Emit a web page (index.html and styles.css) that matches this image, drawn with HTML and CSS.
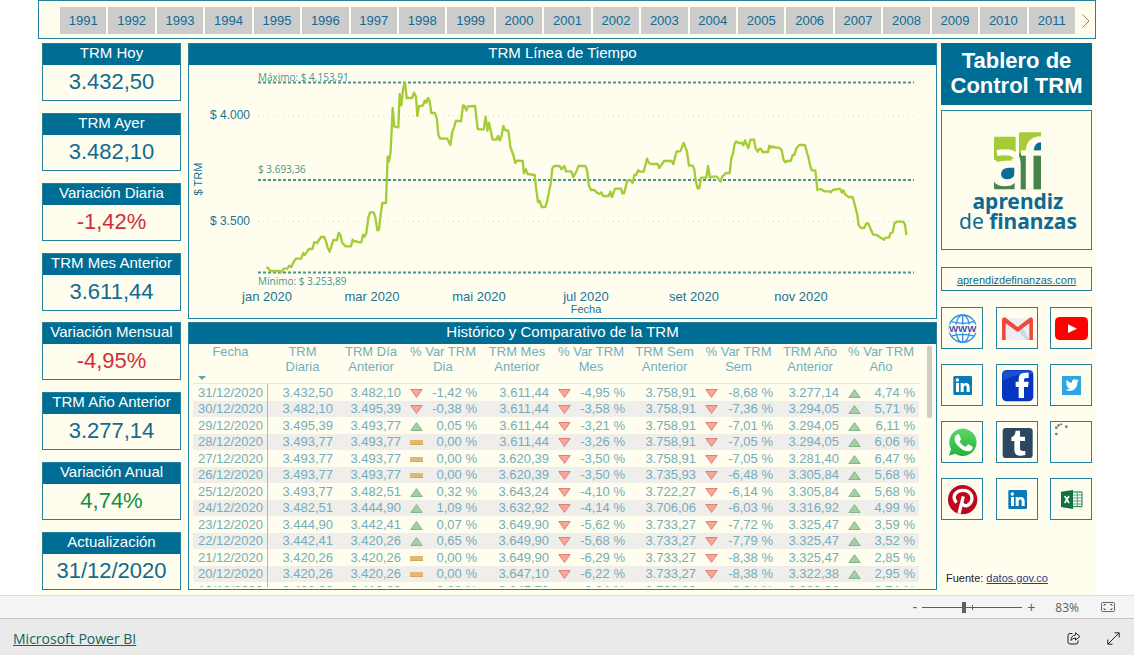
FILE: index.html
```html
<!DOCTYPE html>
<html lang="es">
<head>
<meta charset="utf-8">
<meta name="viewport" content="width=device-width, initial-scale=1">
<title>Tablero de Control TRM</title>
<link rel="stylesheet" href="styles.css">
</head>
<body>
<svg class="defs" aria-hidden="true">
  <symbol id="dn" viewBox="0 0 13 9"><path d="M.8.5h11.4L6.5 8.4z" fill="#f6a79a" stroke="#dd8176"/></symbol>
  <symbol id="up" viewBox="0 0 13 9"><path d="M.8 8.5h11.4L6.5.6z" fill="#a3cfa5" stroke="#86b58c"/></symbol>
  <symbol id="eq" viewBox="0 0 13 9"><path d="M0 2h13v5H0z" fill="#e2b873"/><path d="M0 6.500h13" stroke="#d1a967"/></symbol>
  <symbol id="linkedin" viewBox="3 3 120 120">
    <rect x="37" y="36" width="56" height="57" rx="4" fill="#0a7ab5"/>
    <g fill="#fff"><circle cx="49" cy="48" r="5"/><path d="M45 57h9v27h-9zM59 57h8v4c4-6 19-7 19 8v15h-9V70c0-8-9-7-9 0v14h-9z"/></g>
  </symbol>
</svg>

<main class="report">
  <nav class="slicer" aria-label="Año">
    <div class="years">
      <button>1991</button><button>1992</button><button>1993</button><button>1994</button><button>1995</button><button>1996</button><button>1997</button><button>1998</button><button>1999</button><button>2000</button><button>2001</button><button>2002</button><button>2003</button><button>2004</button><button>2005</button><button>2006</button><button>2007</button><button>2008</button><button>2009</button><button>2010</button><button>2011</button>
    </div>
    <button class="next" aria-label="Siguiente"><svg viewBox="0 0 8 14" width="8" height="14"><path d="M.5.5 7 7 .5 13.500" fill="none" stroke="#a07f58"/></svg></button>
  </nav>

  <div class="board">
    <section class="cards">
      <article class="panel"><h2>TRM Hoy</h2><p>3.432,50</p></article>
      <article class="panel"><h2>TRM Ayer</h2><p>3.482,10</p></article>
      <article class="panel"><h2>Variación Diaria</h2><p class="neg">-1,42%</p></article>
      <article class="panel"><h2>TRM Mes Anterior</h2><p>3.611,44</p></article>
      <article class="panel"><h2>Variación Mensual</h2><p class="neg">-4,95%</p></article>
      <article class="panel"><h2>TRM Año Anterior</h2><p>3.277,14</p></article>
      <article class="panel"><h2>Variación Anual</h2><p class="pos">4,74%</p></article>
      <article class="panel"><h2>Actualización</h2><p>31/12/2020</p></article>
    </section>

    <div class="center">
      <section class="panel">
        <h2>TRM Línea de Tiempo</h2>
        <svg class="chart" viewBox="189 66 747 252" role="img" aria-label="TRM Línea de Tiempo">
          <g class="grid"><path d="M258 115.500H914M258 221.500H914"/></g>
          <g class="limits"><path d="M258 82.500H914M258 180H914M258 272.500H914"/></g>
          <svg x="180" y="40" width="760" height="280" viewBox="0 0 2280 840">
            <path class="line" d="M259 683 265 684 270 693 300 693 304 697 311 686 322 686 328 677 334 681 341 665 348 656 364 656 370 639 375 645 386 627 397 627 403 606 411 609 423 591 433 591 438 605 443 623 449 635 460 600 471 600 476 578 481 585 487 609 497 619 513 619 518 599 522 605 528 603 533 606 544 607 549 584 554 590 559 579 565 533 570 517 581 517 586 532 592 571 597 569 602 524 607 489 618 489 620 430 623 350 627 365 632 333 638 204 643 260 655 262 659 162 664 196 670 142 675 128 680 174 697 174 702 158 708 170 712 228 717 198 729 197 734 182 739 188 744 174 749 184 754 219 765 219 771 238 775 285 781 296 802 296 811 315 817 275 822 262 828 242 843 244 849 196 854 198 859 212 864 199 885 198 893 266 896 268 911 268 917 230 922 272 927 248 938 299 949 299 954 288 959 301 964 290 970 258 975 270 985 272 991 320 1001 348 1006 369 1011 362 1028 363 1032 400 1037 388 1043 402 1064 405 1069 450 1074 486 1079 482 1085 501 1096 501 1101 485 1107 455 1112 432 1117 385 1122 378 1139 378 1144 388 1153 378 1158 394 1174 394 1180 411 1190 393 1195 378 1216 378 1221 390 1227 438 1233 450 1244 450 1249 457 1259 462 1264 457 1269 468 1286 468 1291 455 1296 471 1305 446 1323 446 1327 460 1332 460 1342 422 1353 422 1358 429 1363 405 1368 405 1374 391 1380 395 1391 395 1401 356 1407 369 1413 372 1433 372 1438 384 1452 363 1475 363 1480 373 1485 352 1490 334 1501 334 1511 309 1521 335 1527 377 1538 377 1543 388 1547 422 1553 445 1558 445 1563 413 1579 413 1584 378 1590 413 1595 410 1611 410 1621 425 1627 410 1638 399 1649 399 1654 355 1659 340 1664 311 1669 304 1675 309 1686 309 1690 316 1695 301 1705 325 1711 299 1722 299 1727 325 1733 335 1738 327 1743 327 1748 336 1764 336 1768 317 1774 323 1779 319 1785 323 1797 323 1805 330 1811 361 1816 367 1821 363 1832 363 1838 345 1843 345 1849 325 1858 315 1875 315 1881 338 1885 350 1890 375 1895 391 1906 391 1912 450 1922 447 1933 454 1948 454 1953 457 1958 450 1980 446 1986 458 1990 451 1996 464 2006 471 2017 471 2022 485 2027 505 2032 525 2036 555 2043 564 2053 564 2059 550 2065 550 2073 570 2080 584 2090 585 2102 593 2112 599 2116 593 2127 593 2132 579 2138 577 2143 551 2150 545 2170 545 2175 554 2179 585"/>
          </svg>
          <g class="ref"><text x="258" y="81">Máximo: $ 4.153,91</text><text x="258" y="173">$ 3.693,36</text><text x="258" y="285">Mínimo: $ 3.253,89</text></g>
          <g class="axis">
            <text class="value" x="250" y="119">$ 4.000</text><text class="value" x="250" y="225">$ 3.500</text>
            <text x="267" y="301">jan 2020</text><text x="372" y="301">mar 2020</text><text x="479" y="301">mai 2020</text><text x="586" y="301">jul 2020</text><text x="694" y="301">set 2020</text><text x="801" y="301">nov 2020</text>
            <text class="name" x="586" y="313">Fecha</text>
            <text class="name" transform="translate(202 179) rotate(-90)">$ TRM</text>
          </g>
        </svg>
      </section>

      <section class="panel">
        <h2>Histórico y Comparativo de la TRM</h2>
        <div class="scroller">
          <table class="history">
            <colgroup><col class="c75"><col class="c69"><col class="c68"><col class="c76"><col class="c72"><col class="c76"><col class="c71"><col class="c77"><col class="c66"><col class="c76"></colgroup>
            <thead><tr><th>Fecha<svg class="sort" viewBox="0 0 8 4"><path d="M0 0h8L4 4z" fill="#5fa3b5"/></svg></th><th>TRM Diaria</th><th>TRM Día Anterior</th><th>% Var TRM Dia</th><th>TRM Mes Anterior</th><th>% Var TRM Mes</th><th>TRM Sem Anterior</th><th>% Var TRM Sem</th><th>TRM Año Anterior</th><th>% Var TRM Año</th></tr></thead>
            <tbody>
              <tr><td>31/12/2020</td><td>3.432,50</td><td>3.482,10</td><td><svg><use href="#dn"/></svg>-1,42 %</td><td>3.611,44</td><td><svg><use href="#dn"/></svg>-4,95 %</td><td>3.758,91</td><td><svg><use href="#dn"/></svg>-8,68 %</td><td>3.277,14</td><td><svg><use href="#up"/></svg>4,74 %</td></tr>
              <tr><td>30/12/2020</td><td>3.482,10</td><td>3.495,39</td><td><svg><use href="#dn"/></svg>-0,38 %</td><td>3.611,44</td><td><svg><use href="#dn"/></svg>-3,58 %</td><td>3.758,91</td><td><svg><use href="#dn"/></svg>-7,36 %</td><td>3.294,05</td><td><svg><use href="#up"/></svg>5,71 %</td></tr>
              <tr><td>29/12/2020</td><td>3.495,39</td><td>3.493,77</td><td><svg><use href="#up"/></svg>0,05 %</td><td>3.611,44</td><td><svg><use href="#dn"/></svg>-3,21 %</td><td>3.758,91</td><td><svg><use href="#dn"/></svg>-7,01 %</td><td>3.294,05</td><td><svg><use href="#up"/></svg>6,11 %</td></tr>
              <tr><td>28/12/2020</td><td>3.493,77</td><td>3.493,77</td><td><svg><use href="#eq"/></svg>0,00 %</td><td>3.611,44</td><td><svg><use href="#dn"/></svg>-3,26 %</td><td>3.758,91</td><td><svg><use href="#dn"/></svg>-7,05 %</td><td>3.294,05</td><td><svg><use href="#up"/></svg>6,06 %</td></tr>
              <tr><td>27/12/2020</td><td>3.493,77</td><td>3.493,77</td><td><svg><use href="#eq"/></svg>0,00 %</td><td>3.620,39</td><td><svg><use href="#dn"/></svg>-3,50 %</td><td>3.758,91</td><td><svg><use href="#dn"/></svg>-7,05 %</td><td>3.281,40</td><td><svg><use href="#up"/></svg>6,47 %</td></tr>
              <tr><td>26/12/2020</td><td>3.493,77</td><td>3.493,77</td><td><svg><use href="#eq"/></svg>0,00 %</td><td>3.620,39</td><td><svg><use href="#dn"/></svg>-3,50 %</td><td>3.735,93</td><td><svg><use href="#dn"/></svg>-6,48 %</td><td>3.305,84</td><td><svg><use href="#up"/></svg>5,68 %</td></tr>
              <tr><td>25/12/2020</td><td>3.493,77</td><td>3.482,51</td><td><svg><use href="#up"/></svg>0,32 %</td><td>3.643,24</td><td><svg><use href="#dn"/></svg>-4,10 %</td><td>3.722,27</td><td><svg><use href="#dn"/></svg>-6,14 %</td><td>3.305,84</td><td><svg><use href="#up"/></svg>5,68 %</td></tr>
              <tr><td>24/12/2020</td><td>3.482,51</td><td>3.444,90</td><td><svg><use href="#up"/></svg>1,09 %</td><td>3.632,92</td><td><svg><use href="#dn"/></svg>-4,14 %</td><td>3.706,06</td><td><svg><use href="#dn"/></svg>-6,03 %</td><td>3.316,92</td><td><svg><use href="#up"/></svg>4,99 %</td></tr>
              <tr><td>23/12/2020</td><td>3.444,90</td><td>3.442,41</td><td><svg><use href="#up"/></svg>0,07 %</td><td>3.649,90</td><td><svg><use href="#dn"/></svg>-5,62 %</td><td>3.733,27</td><td><svg><use href="#dn"/></svg>-7,72 %</td><td>3.325,47</td><td><svg><use href="#up"/></svg>3,59 %</td></tr>
              <tr><td>22/12/2020</td><td>3.442,41</td><td>3.420,26</td><td><svg><use href="#up"/></svg>0,65 %</td><td>3.649,90</td><td><svg><use href="#dn"/></svg>-5,68 %</td><td>3.733,27</td><td><svg><use href="#dn"/></svg>-7,79 %</td><td>3.325,47</td><td><svg><use href="#up"/></svg>3,52 %</td></tr>
              <tr><td>21/12/2020</td><td>3.420,26</td><td>3.420,26</td><td><svg><use href="#eq"/></svg>0,00 %</td><td>3.649,90</td><td><svg><use href="#dn"/></svg>-6,29 %</td><td>3.733,27</td><td><svg><use href="#dn"/></svg>-8,38 %</td><td>3.325,47</td><td><svg><use href="#up"/></svg>2,85 %</td></tr>
              <tr><td>20/12/2020</td><td>3.420,26</td><td>3.420,26</td><td><svg><use href="#eq"/></svg>0,00 %</td><td>3.647,10</td><td><svg><use href="#dn"/></svg>-6,22 %</td><td>3.733,27</td><td><svg><use href="#dn"/></svg>-8,38 %</td><td>3.322,38</td><td><svg><use href="#up"/></svg>2,95 %</td></tr>
              <tr><td>19/12/2020</td><td>3.420,26</td><td>3.410,60</td><td>0,28 %</td><td>3.647,70</td><td>-6,24 %</td><td>3.722,83</td><td>-8,24 %</td><td>3.329,06</td><td>2,74 %</td></tr>
            </tbody>
          </table>
          <div class="thumb"></div>
        </div>
      </section>
    </div>

    <aside class="side">
      <h1>Tablero de Control TRM</h1>
      <div class="box logo">
        <svg viewBox="0 0 149 138" role="img" aria-label="aprendiz de finanzas">
          <svg x="43" y="14" width="70" height="70" viewBox="0 0 210 210">
            <path d="M27 100V39q0-4 4-4h61v70H27z" fill="#a5cb36"/>
            <path d="M27 120h65v73H31q-4 0-4-4z" fill="#48854c"/>
            <path d="M102 92V26q0-4 4-4h62v70z" fill="#a5cb36"/>
            <path d="M102 85h66v108h-66z" fill="#48854c"/>
            <path d="M24 108q20-8 45-6h28v56q-4 24-36 26-28 0-37-20z" fill="#fffdee"/>
            <path d="M34 98q22-4 44 0l2 9q-24-2-46 4z" fill="#a5cb36"/>
            <path d="M36 84q28-5 46 1 16 8 16 32v78" fill="none" stroke="#fffdee" stroke-width="18"/>
            <path d="M48 146q2-18 24-18h16v16q0 18-20 19-20 0-20-17z" fill="#0a6c97"/>
            <path d="M134 194V78q0-32 36-33" fill="none" stroke="#fffdee" stroke-width="23"/>
            <path d="M108 84h62" stroke="#fffdee" stroke-width="16"/>
            <path d="M147 76q1-24 21-24v24z" fill="#0a6c97"/>
          </svg>
          <text class="brand" x="76" y="98">aprendiz</text>
          <text class="brand" x="76" y="118"><tspan class="thin">de </tspan>finanzas</text>
        </svg>
      </div>
      <div class="box site"><a href="#">aprendizdefinanzas.com</a></div>
      <div class="social">
        <a class="box" href="#" aria-label="Sitio web"><svg viewBox="3 3 120 120"><g fill="none" stroke="#2c94e8" stroke-width="4"><circle cx="65" cy="65" r="41"/><ellipse cx="65" cy="65" rx="21" ry="41"/><path d="M65 24v82M31 44q34 10 68 0M31 87q34-10 68 0"/></g><path d="M22 53h87v24H22z" fill="#fffdee"/><text class="www" x="65" y="75">WWW</text></svg></a>
        <a class="box" href="#" aria-label="Gmail"><svg viewBox="3 3 120 120"><path d="M18 34h93v65H18z" fill="#eceff1"/><path d="m65 70 15-9 21 38H90z" fill="#cfd8dc"/><path d="M18 99V40q0-9 9-9l38 29 38-29q8 0 8 9v59h-11V49L65 75 29 49v50z" fill="#f4483a"/></svg></a>
        <a class="box" href="#" aria-label="YouTube"><svg viewBox="3 3 120 120"><rect x="15" y="30" width="99" height="69" rx="14" fill="#fe0000"/><path d="m54 52 27 13-27 13z" fill="#fff"/></svg></a>
        <a class="box" href="#" aria-label="LinkedIn"><svg><use href="#linkedin"/></svg></a>
        <a class="box" href="#" aria-label="Facebook"><svg viewBox="3 3 120 120"><rect x="18" y="18" width="94" height="94" rx="14" fill="#0636c0"/><path d="M20 50V32q0-12 12-12h66q12 0 12 10-50-2-90 20z" fill="#1c50cc"/><path d="M68 102V69h-9V53h9V45q0-19 20-19h10v16h-8q-6 0-6 6v5h14l-2 16H84v33z" fill="#fff"/></svg></a>
        <a class="box" href="#" aria-label="Twitter"><svg viewBox="3 3 120 120"><path d="M36 36h57v57H36z" fill="#2ca5e0"/><path d="M47 77c7 0 10-2 12-4-4 0-7-2-8-6h4c-5-1-7-5-7-9l4 1c-4-3-4-8-2-11 4 5 9 8 16 8-2-10 8-13 14-8l6-2-4 5 5-1-5 5c1 22-20 32-35 22z" fill="#fff"/></svg></a>
        <a class="box" href="#" aria-label="WhatsApp"><svg viewBox="3 3 120 120"><defs><linearGradient id="wa" x2="0" y2="1"><stop stop-color="#5fd668"/><stop offset="1" stop-color="#22b33a"/></linearGradient></defs><path d="m18 110 7-24a46 46 0 1 1 17 18z" fill="#fff"/><path d="m24 104 6-20a41 41 0 1 1 13 14z" fill="url(#wa)"/><path d="M47 41q5-4 8 1l5 11q0 3-5 8 6 12 19 17l6-7q2-2 5 0l10 6q1 12-13 14-16 0-30-15Q37 61 42 47z" fill="#fff"/></svg></a>
        <a class="box" href="#" aria-label="Tumblr"><svg viewBox="3 3 120 120"><rect x="20" y="21" width="90" height="90" rx="10" fill="#2c4762"/><path d="M59 29h13v18h15v13H72v22q0 8 8 8h8v12q-10 3-18 2-15-2-15-18V60h-9V49q12-4 13-20z" fill="#fff"/></svg></a>
        <a class="box" href="#" aria-label="Cargando"><svg viewBox="3 3 120 120"><g fill="#777"><circle cx="19" cy="20" r="4"/><circle cx="26" cy="13" r="4"/><circle cx="34" cy="10" r="3"/><circle cx="49" cy="17" r="4"/><circle cx="19" cy="39" r="4"/></g></svg></a>
        <a class="box" href="#" aria-label="Pinterest"><svg viewBox="3 3 120 120"><circle cx="65" cy="65" r="47" fill="#fff"/><circle cx="65" cy="65" r="44" fill="#bd081c"/><path d="M46 74C30 54 46 37 66 37s30 15 26 30-20 22-28 10M67 55 54 107" fill="none" stroke="#fff" stroke-width="10"/></svg></a>
        <a class="box" href="#" aria-label="LinkedIn personal"><svg><use href="#linkedin"/></svg></a>
        <a class="box" href="#" aria-label="Excel"><svg viewBox="3 3 120 120"><path d="M66 42h30v44H66z" fill="#fff" stroke="#157744" stroke-width="3"/><path d="M66 51h30M66 60h30M66 69h30M66 78h30M82 42v44" stroke="#157744" stroke-width="2"/><path d="m33 41 36-5v57l-36-6z" fill="#0f7240"/><path d="m44 54 13 21M57 54 44 75" stroke="#fff" stroke-width="5"/></svg></a>
      </div>
      <p class="source">Fuente: <a href="#">datos.gov.co</a></p>
    </aside>
  </div>
</main>

<div class="zoombar">
  <button aria-label="Alejar">-</button>
  <input type="range" min="0" max="100" value="41" aria-label="Zoom">
  <button aria-label="Acercar">+</button>
  <output>83%</output>
  <button class="fit" aria-label="Ajustar a la página"><svg viewBox="0 0 14 10" width="14" height="10" fill="none" stroke="#666"><rect x=".5" y=".5" width="13" height="9" rx="1"/><path d="M3 4V2.500h2M9 2.500h2V4M11 6v1.500H9M5 7.500H3V6"/></svg></button>
</div>
<footer class="footer">
  <a href="#">Microsoft Power BI</a>
  <div class="actions">
    <button aria-label="Compartir"><svg viewBox="0 0 14 13" width="14" height="13" fill="none" stroke="#222"><path d="M5.500 1.500H3q-2 0-2 2V10q0 2 2 2h6q2 0 2-2V8.500"/><path d="M8.500.8 13 4.500 8.500 8V6Q5.500 6 4 8.500 4 3.500 8.500 3z"/></svg></button>
    <button aria-label="Pantalla completa"><svg viewBox="0 0 13 13" width="13" height="13" fill="none" stroke="#222"><path d="M1 12 12 1M7.500.8h4.700v4.700M.8 7.500v4.700h4.700"/></svg></button>
  </div>
</footer>
</body>
</html>
```
FILE: styles.css
```css
* { box-sizing: border-box; }

body {
  margin: 0;
  min-height: 100vh;
  display: flex;
  flex-direction: column;
  background: #fff;
  color: #126a92;
  font-family: "Liberation Sans", Arial, sans-serif;
}

h1, h2, p { margin: 0; font-weight: 400; }
button { border: 0; padding: 0; background: none; color: inherit; font: inherit; cursor: pointer; }
.defs { position: absolute; width: 0; height: 0; }

.report { flex: 1; margin: 0 38px; background: #fffdee; }

.slicer {
  display: flex;
  height: 39px;
  padding: 6px 5px 4px 21px;
  border: 1px solid #2581a0;
}
.years { flex: 1; display: grid; grid-template-columns: repeat(21, 1fr); gap: 2px; }
.years button { background: #ccc; font-size: 13px; }
.next { width: 15px; }
.next svg { display: block; margin: 0 0 0 auto; }

.board {
  display: grid;
  grid-template-columns: 139px minmax(0, 1fr) 151px;
  padding: 4px 4px 5px;
}

.cards { display: flex; flex-direction: column; justify-content: space-between; }
.panel { border: 1px solid #2581a0; }
.panel h2 {
  height: 21px;
  background: #006e94;
  color: #fff;
  font-size: 15px;
  line-height: 17px;
  text-align: center;
  white-space: nowrap;
}
.cards p { padding-bottom: 2px; font-size: 22px; line-height: 33px; text-align: center; }
.cards .neg { color: #d02f3a; }
.cards .pos { color: #109040; }

.center { display: flex; flex-direction: column; gap: 3px; margin: 0 4px 0 7px; }
.chart { display: block; width: 100%; height: auto; margin-top: 1px; }
.line { fill: none; stroke: #a4cb38; stroke-width: 7; stroke-linejoin: round; }
.grid { stroke: #d9d8cd; stroke-dasharray: 1 4; }
.limits { stroke: #4b938d; stroke-width: 2; stroke-dasharray: 3 2; }
.ref { fill: #4a918f; font: 10px "Open Sans", sans-serif; }
.axis { fill: #1a7396; font-size: 13px; text-anchor: middle; }
.axis .value { font-size: 12px; text-anchor: end; }
.axis .name { font-size: 11px; }

.scroller { display: flex; height: 243px; margin-bottom: 2px; padding-left: 4px; overflow: hidden; }
.history {
  flex: 1;
  width: 0;
  table-layout: fixed;
  border-collapse: separate;
  border-spacing: 0;
  color: #74adbd;
  font-size: 13px;
}
.c66 { width: 66px; }
.c68 { width: 68px; }
.c69 { width: 69px; }
.c71 { width: 71px; }
.c72 { width: 72px; }
.c75 { width: 75px; }
.c76 { width: 76px; }
.c77 { width: 77px; }
.history th {
  height: 40px;
  padding: 0 2px;
  border-bottom: 1px solid #e2eadb;
  font-weight: 400;
  line-height: 15px;
  vertical-align: top;
}
.sort { display: block; width: 8px; height: 4px; margin: 17px 0 0 3px; }
.history td { height: 17px; padding: 0 4px; line-height: 16px; text-align: right; white-space: nowrap; }
.history tbody tr:nth-child(even) td { height: 16px; background: #efeeea; }
.history tbody td:first-child { border-right: 1px solid #9cc79b; }
.history td svg { float: left; width: 13px; height: 9px; margin: 4px 0 0 1px; }
.thumb { width: 5px; height: 72px; margin: 2px 4px 0 8px; border-radius: 2px; background: #cfccc4; }

.side { display: flex; flex-direction: column; }
.side h1 {
  height: 62px;
  padding: 5px 8px;
  background: #006e94;
  color: #fff;
  font-size: 22px;
  font-weight: 700;
  line-height: 25px;
  text-align: center;
}
.box { display: block; border: 1px solid #2581a0; }
.box > svg { display: block; width: 100%; height: 100%; }
.logo { height: 140px; margin: 5px 0 17px; }
.brand { fill: #0f6a93; font: 700 21px "Noto Sans", sans-serif; text-anchor: middle; }
.thin { font-weight: 400; }
.site { height: 24px; font-size: 11px; line-height: 24px; text-align: center; }
.site a { color: inherit; }
.social { display: grid; grid-template-columns: repeat(3, 42px); justify-content: space-between; gap: 15px 0; margin-top: 16px; }
.social a { height: 42px; }
.www { fill: #3f51b5; font: 700 29px "Liberation Sans", sans-serif; text-anchor: middle; }
.source { margin: auto 0 4px 5px; color: #222; font-size: 11px; line-height: 16px; }
.source a { color: #283a86; }

.zoombar {
  display: flex;
  align-items: center;
  justify-content: flex-end;
  height: 24px;
  padding-right: 19px;
  border-top: 1px solid #ddd;
  border-bottom: 1px solid #c4c4c4;
  background: #f4f4f4;
  color: #605e5c;
  font-size: 14px;
}
.zoombar input {
  width: 100px;
  height: 12px;
  margin: 0 5px;
  appearance: none;
  background:
    linear-gradient(#605e5c, #605e5c) 0 6px / 100% 1px no-repeat,
    linear-gradient(#605e5c, #605e5c) 50px 4px / 1px 5px no-repeat;
}
.zoombar input::-webkit-slider-thumb { appearance: none; width: 4px; height: 11px; background: #605e5c; }
.zoombar output { margin: 0 22px 0 20px; font: 12px "Open Sans", sans-serif; }
.fit svg { display: block; }

.footer {
  display: flex;
  align-items: center;
  justify-content: space-between;
  height: 36px;
  padding: 3px 14px 0 13px;
  background: #eaeaea;
}
.footer a { color: #0f6660; font: 14px "Open Sans", sans-serif; }
.actions { display: flex; gap: 26px; }
.actions svg { display: block; }
```
